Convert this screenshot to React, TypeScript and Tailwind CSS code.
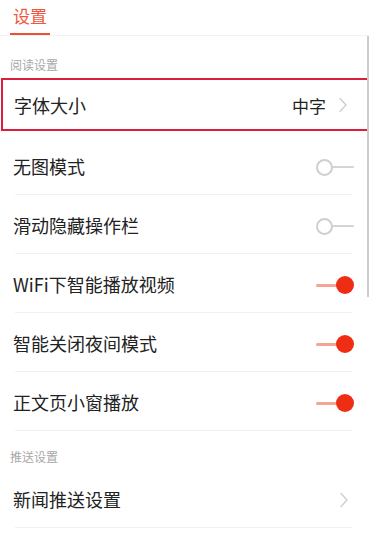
import React, { useState } from 'react';

type Row = { label: string; kind: 'toggle'; on: boolean } | { label: string; kind: 'link'; value?: string };

function Chevron() {
  return (
    <svg width="10" height="16" viewBox="0 0 10 16" className="shrink-0">
      <path d="M2 1.5 L8 8 L2 14.5" fill="none" stroke="#cdcdcd" strokeWidth="1.3" strokeLinecap="round" strokeLinejoin="round" />
    </svg>
  );
}

function Toggle({ on, onClick }: { on: boolean; onClick: () => void }) {
  return (
    <button onClick={onClick} className="relative w-[38px] h-[20px] shrink-0">
      {on ? (
        <>
          <span className="absolute left-0 top-[9px] w-[22px] h-[3px] bg-[#f5a394] rounded-full" />
          <span className="absolute right-0 top-[1px] w-[18px] h-[18px] rounded-full bg-[#ee2d12]" />
        </>
      ) : (
        <>
          <span className="absolute right-0 top-[9px] w-[22px] h-[2px] bg-[#d4d4d4] rounded-full" />
          <span className="absolute left-0 top-[2px] w-[17px] h-[17px] rounded-full border-[2.5px] border-[#cfcfcf] bg-white" />
        </>
      )}
    </button>
  );
}

function SectionTitle({ text, h }: { text: string; h: string }) {
  return (
    <div className={`${h} flex items-end px-[10px] text-[12px] leading-[18px] text-[#a8a8a8]`}>{text}</div>
  );
}

export default function App() {
  const [rows, setRows] = useState<Row[]>([
    { label: '无图模式', kind: 'toggle', on: false },
    { label: '滑动隐藏操作栏', kind: 'toggle', on: false },
    { label: 'WiFi下智能播放视频', kind: 'toggle', on: true },
    { label: '智能关闭夜间模式', kind: 'toggle', on: true },
    { label: '正文页小窗播放', kind: 'toggle', on: true },
  ]);

  const flip = (i: number) =>
    setRows((r) => r.map((x, j) => (j === i && x.kind === 'toggle' ? { ...x, on: !x.on } : x)));

  return (
    <div className="relative w-[369px] h-[543px] overflow-hidden bg-white text-[#222]" style={{ fontFamily: '"Noto Sans CJK SC", "Noto Sans", sans-serif' }}>
      {/* header */}
      <div className="h-[36px] border-b border-[#f2f2f2] px-[10px]">
        <div className="inline-flex flex-col items-center w-[40px]">
          <span className="text-[17px] leading-[20px] mt-[6px] text-[#f0573b]">设置</span>
          <span className="mt-[7px] w-[40px] h-[2px] bg-[#ee4f33]" />
        </div>
      </div>

      <div className="h-[42px] flex items-end px-[10px] pb-[4px] text-[12px] leading-[18px] text-[#a8a8a8]">阅读设置</div>

      <div className="h-[53px] mx-[1px] -mr-[4px] border-2 border-[#d91f3c] flex items-center pl-[11px] pr-[23px]">
        <span className="flex-1 text-[18px] pt-[2px]">字体大小</span>
        <span className="text-[17px] pt-[2px] mr-[12px]">中字</span>
        <Chevron />
      </div>
      <div className="h-[5px]" />

      {rows.map((r, i) => (
        <div key={r.label} className="h-[59px] flex flex-col">
          <div className="flex-1 flex items-center pl-[13px] pr-[15px] pt-[3px]">
            <span className="flex-1 text-[18px]">{r.label}</span>
            {r.kind === 'toggle' ? <Toggle on={r.on} onClick={() => flip(i)} /> : <Chevron />}
          </div>
          <div className="h-px ml-[15px] mr-[17px] bg-[#f0f0f0]" />
        </div>
      ))}

      <div className="h-[38px] flex items-end px-[10px] pb-[3px] text-[12px] leading-[18px] text-[#a8a8a8]">推送设置</div>

      <div className="h-[59px] flex flex-col">
        <div className="flex-1 flex items-center pl-[13px] pr-[20px] pt-[3px]">
          <span className="flex-1 text-[18px]">新闻推送设置</span>
          <Chevron />
        </div>
        <div className="h-px ml-[15px] mr-[17px] bg-[#f0f0f0]" />
      </div>

      {/* scrollbar */}
      <div className="absolute right-0 top-[36px] w-[2px] h-[261px] bg-[#cccccc]" />
    </div>
  );
}
